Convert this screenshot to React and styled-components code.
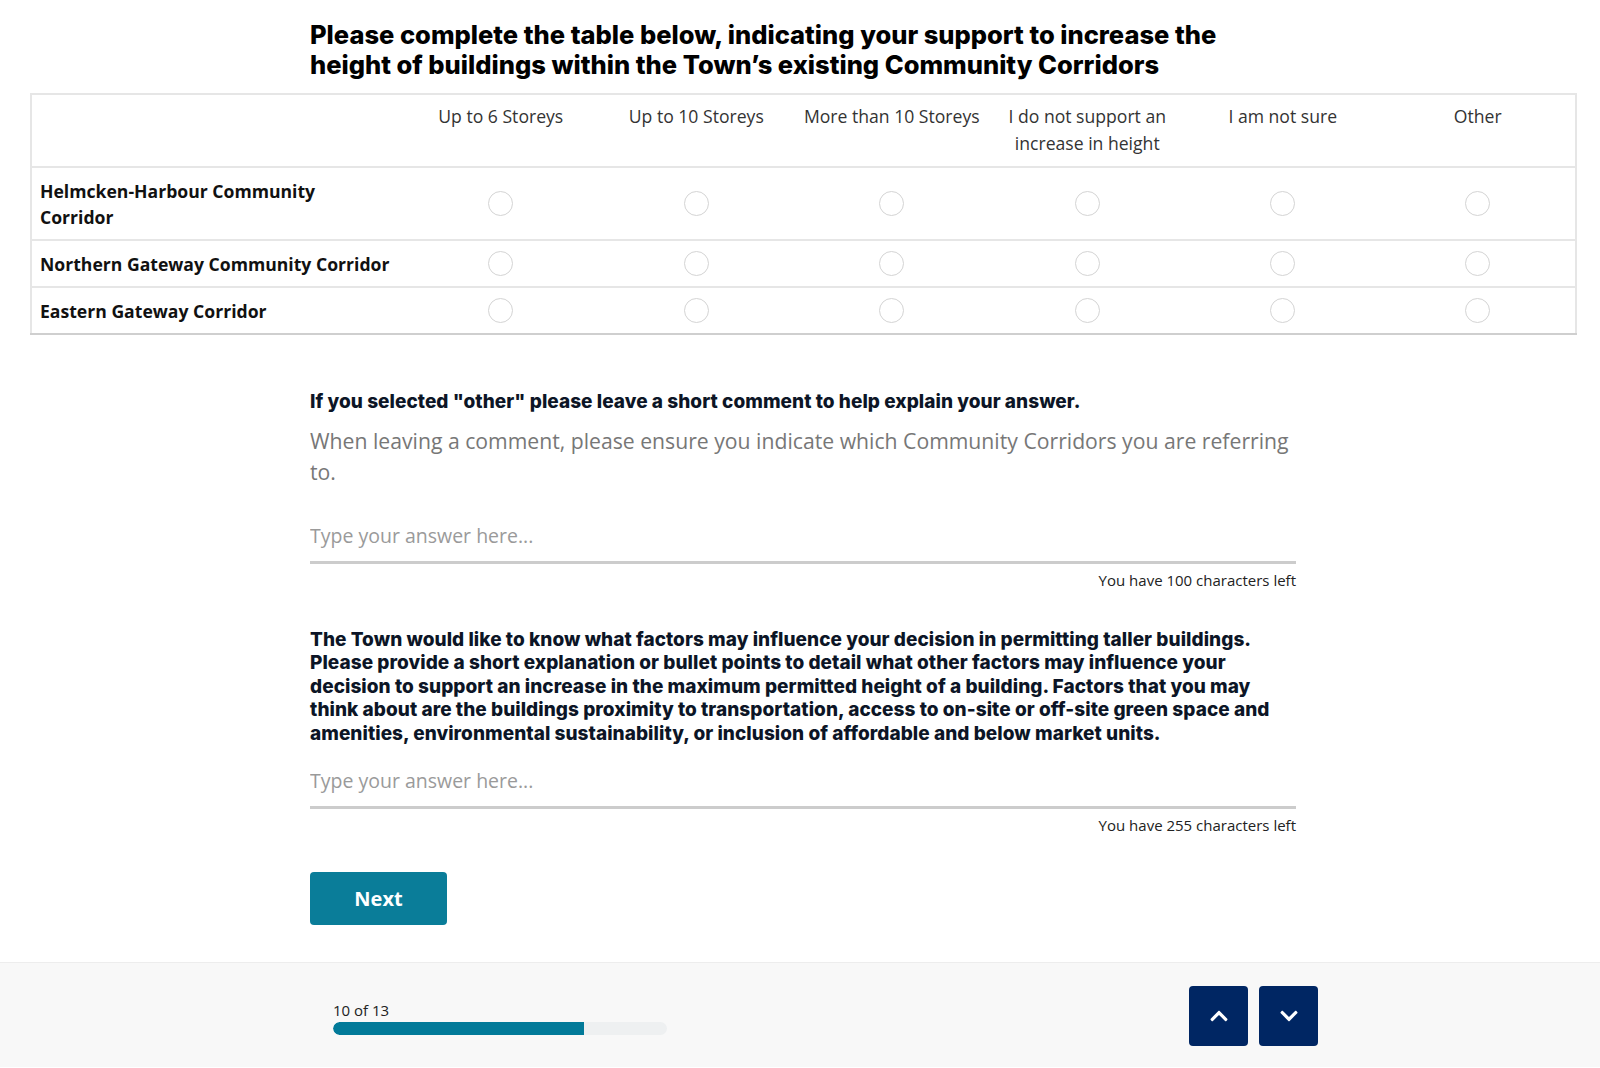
import React from 'react'
import styled, { createGlobalStyle } from 'styled-components'
import { FaChevronUp, FaChevronDown } from 'react-icons/fa'

const columns = [
  'Up to 6 Storeys',
  'Up to 10 Storeys',
  'More than 10 Storeys',
  'I do not support an increase in height',
  'I am not sure',
  'Other',
]

const corridors = [
  'Helmcken-Harbour Community Corridor',
  'Northern Gateway Community Corridor',
  'Eastern Gateway Corridor',
]

const progress = 75

const GlobalStyle = createGlobalStyle`
  * { box-sizing: border-box; }
  body {
    margin: 0;
    background: #fff;
    font-family: 'Open Sans', 'Noto Sans', sans-serif;
    color: #333;
  }
`

export default () => (
  <>
    <GlobalStyle />
    <Page>
      <Content>
        <Heading>
          Please complete the table below, indicating your support to increase the
          height of buildings within the Town’s existing Community Corridors
        </Heading>
      </Content>

      <Matrix>
        <thead>
          <tr>
            <HeadCell />
            {columns.map(c => (
              <HeadCell key={c}>{c}</HeadCell>
            ))}
          </tr>
        </thead>
        <tbody>
          {corridors.map(row => (
            <Row key={row}>
              <RowLabel>{row}</RowLabel>
              {columns.map(c => (
                <RadioCell key={c}>
                  <Radio type="radio" name={row} aria-label={c} />
                </RadioCell>
              ))}
            </Row>
          ))}
        </tbody>
      </Matrix>

      <Content>
        <Question top={55}>
          If you selected "other" please leave a short comment to help explain your answer.
        </Question>
        <Hint>
          When leaving a comment, please ensure you indicate which Community Corridors you are
          referring to.
        </Hint>
        <Answer top={34} placeholder="Type your answer here..." />
        <Counter>You have 100 characters left</Counter>

        <Question top={38}>
          The Town would like to know what factors may influence your decision in permitting
          taller buildings. Please provide a short explanation or bullet points to detail what
          other factors may influence your decision to support an increase in the maximum
          permitted height of a building. Factors that you may think about are the buildings
          proximity to transportation, access to on-site or off-site green space and amenities,
          environmental sustainability, or inclusion of affordable and below market units.
        </Question>
        <Answer top={21} placeholder="Type your answer here..." />
        <Counter>You have 255 characters left</Counter>

        <NextButton>Next</NextButton>
      </Content>
    </Page>

    <Footer>
      <FooterInner>
        <Progress>
          <span>10 of 13</span>
          <Track>
            <Fill style={{ width: `${progress}%` }} />
          </Track>
        </Progress>
        <NavButtons>
          <NavButton aria-label="Previous">
            <FaChevronUp />
          </NavButton>
          <NavButton aria-label="Next">
            <FaChevronDown />
          </NavButton>
        </NavButtons>
      </FooterInner>
    </Footer>
  </>
)

const Page = styled.main`
  padding: 20px 0 37px;
`

const Content = styled.div`
  width: 986px;
  margin-left: calc(50% - 490px);
  display: flex;
  flex-direction: column;
`

const Heading = styled.h1`
  margin: 0;
  font-family: 'Inter', sans-serif;
  font-weight: 800;
  font-size: 25.5px;
  line-height: 30px;
  color: #000;
  max-width: 920px;
`

const Matrix = styled.table`
  margin: 13px 23px 0 30px;
  width: calc(100% - 53px);
  table-layout: fixed;
  border-collapse: collapse;
  border: 2px solid #e6e6e6;
  border-bottom-color: #cfcfcf;
`

const HeadCell = styled.th`
  padding: 8px 4px 9px;
  font-weight: 400;
  font-size: 17.6px;
  line-height: 27px;
  color: #333;
  text-align: center;
  vertical-align: top;

  &:first-child {
    width: 372px;
  }
`

const Row = styled.tr`
  border-top: 2px solid #e6e6e6;
`

const RowLabel = styled.td`
  padding: 10px 10px 9px 8px;
  font-weight: 700;
  font-size: 17.6px;
  line-height: 26px;
  color: #111;
`

const RadioCell = styled.td`
  text-align: center;
  vertical-align: middle;
`

const Radio = styled.input`
  appearance: none;
  width: 25px;
  height: 25px;
  margin: 4px 0 0;
  border: 1px solid #d4d4d4;
  border-radius: 50%;
  background: #fff;
`

const Question = styled.h2`
  margin: ${p => p.top}px 0 0;
  font-family: 'Inter', sans-serif;
  font-weight: 800;
  font-size: 19px;
  line-height: 23.5px;
  letter-spacing: 0.05px;
  color: #0c1526;
`

const Hint = styled.p`
  margin: 11px 0 0;
  font-size: 21.2px;
  line-height: 31px;
  color: #777;
`

const Answer = styled.input`
  margin-top: ${p => p.top}px;
  width: 100%;
  padding: 0 0 10px;
  border: 0;
  border-bottom: 3px solid #cccccc;
  font-family: inherit;
  font-size: 19.5px;
  line-height: 30px;
  color: #333;
  outline: none;

  &::placeholder {
    color: #9a9a9a;
  }
`

const Counter = styled.div`
  margin-top: 6px;
  text-align: right;
  font-size: 15px;
  line-height: 20px;
  color: #222;
`

const NextButton = styled.button`
  margin-top: 37px;
  align-self: flex-start;
  width: 137px;
  height: 53px;
  border: 0;
  border-radius: 4px;
  background: #0a7d99;
  color: #fff;
  font-family: inherit;
  font-weight: 700;
  font-size: 20px;
  cursor: pointer;
`

const Footer = styled.footer`
  background: #f8f8f8;
  border-top: 1px solid #ededed;
  height: 105px;
  display: flex;
  align-items: flex-start;
`

const FooterInner = styled.div`
  width: 985px;
  margin-left: calc(50% - 467px);
  padding-top: 23px;
  display: flex;
  justify-content: space-between;
  align-items: flex-start;
`

const Progress = styled.div`
  width: 334px;
  padding-top: 14px;
  display: flex;
  flex-direction: column;
  gap: 2px;
  font-size: 15px;
  line-height: 20px;
  color: #222;
`

const Track = styled.div`
  height: 13px;
  border-radius: 7px;
  background: #eef0f1;
  overflow: hidden;
`

const Fill = styled.div`
  height: 100%;
  background: #027a99;
  border-radius: 7px 0 0 7px;
`

const NavButtons = styled.div`
  display: flex;
  gap: 11px;
`

const NavButton = styled.button`
  width: 59px;
  height: 60px;
  border: 0;
  border-radius: 4px;
  background: #002663;
  color: #fff;
  font-size: 20px;
  display: flex;
  align-items: center;
  justify-content: center;
  cursor: pointer;
`
